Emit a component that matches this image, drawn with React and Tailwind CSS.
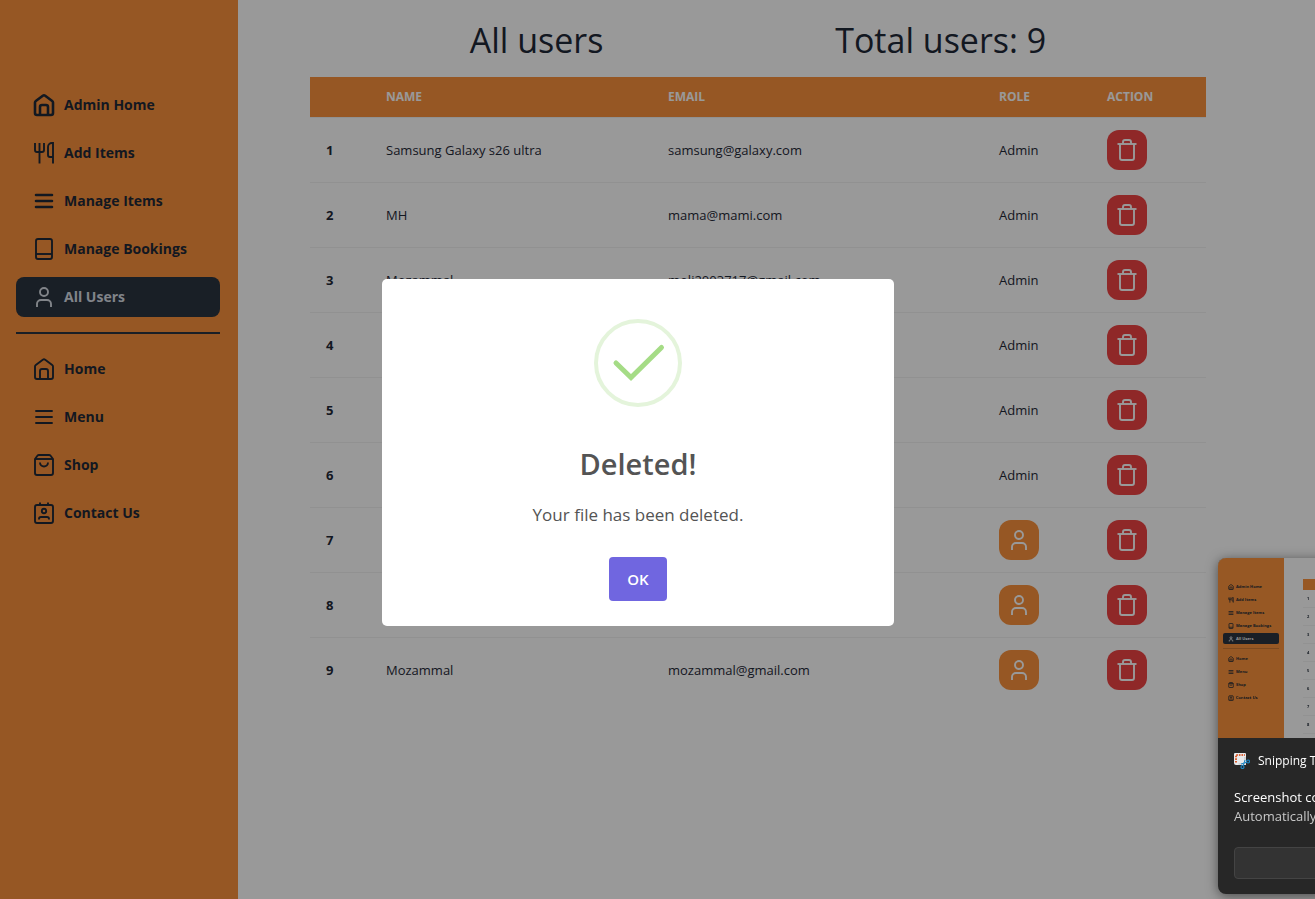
const INK = 'text-[#1f2937]';

function Icon({ name, size = 'size-6', weight = 1.9 }) {
  const shapes = {
    home: (
      <>
        <path d="M3 9.6V20a2 2 0 0 0 2 2h14a2 2 0 0 0 2-2V9.6a2 2 0 0 0-.8-1.6l-7-5.3a2 2 0 0 0-2.4 0l-7 5.3A2 2 0 0 0 3 9.6Z" />
        <path d="M8 22v-8a2 2 0 0 1 2-2h4a2 2 0 0 1 2 2v8" />
      </>
    ),
    utensils: (
      <>
        <path d="M3 2v7a2 2 0 0 0 2 2h5a2 2 0 0 0 2-2V2" />
        <path d="M7.5 2v20.5" />
        <path d="M21 22.500V2h-1a4 4 0 0 0-4 4v8a2 2 0 0 0 2 2h3" />
      </>
    ),
    menu: <path d="M4 6h16M4 12h16M4 18h16" strokeLinecap="round" />,
    book: (
      <>
        <rect x="4" y="2" width="16" height="20" rx="2" />
        <path d="M4 17h16" />
      </>
    ),
    user: (
      <>
        <circle cx="12" cy="7" r="4" />
        <path d="M5 22v-3a4 4 0 0 1 4-4h6a4 4 0 0 1 4 4v3" />
      </>
    ),
    bag: (
      <>
        <path d="M3 6v14a2 2 0 0 0 2 2h14a2 2 0 0 0 2-2V6l-2.400-3.200A2 2 0 0 0 17 2H7a2 2 0 0 0-1.600.8L3 6Z" />
        <path d="M3 6h18" />
        <path d="M8 9.500a4 4 0 0 0 8 0" />
      </>
    ),
    contact: (
      <>
        <rect x="3" y="4" width="18" height="18" rx="2" />
        <path d="M8 1.500V4M16 1.500V4" />
        <circle cx="12" cy="10" r="2.200" />
        <path d="M7 18.500V18a2 2 0 0 1 2-2h6a2 2 0 0 1 2 2v.5" />
      </>
    ),
    trash: (
      <>
        <path d="M5 6v14a2 2 0 0 0 2 2h10a2 2 0 0 0 2-2V6" />
        <path d="M2.500 6h19" />
        <path d="M8 6V4a2 2 0 0 1 2-2h4a2 2 0 0 1 2 2v2" />
      </>
    ),
  };
  return (
    <svg
      viewBox="0 0 24 24"
      fill="none"
      stroke="currentColor"
      strokeWidth={weight}
      className={`${size} shrink-0`}
      aria-hidden="true"
    >
      {shapes[name]}
    </svg>
  );
}

const adminLinks = [
  { label: 'Admin Home', icon: 'home', weight: 2.6 },
  { label: 'Add Items', icon: 'utensils' },
  { label: 'Manage Items', icon: 'menu', weight: 2.6 },
  { label: 'Manage Bookings', icon: 'book' },
  { label: 'All Users', icon: 'user', active: true },
];

const siteLinks = [
  { label: 'Home', icon: 'home' },
  { label: 'Menu', icon: 'menu' },
  { label: 'Shop', icon: 'bag' },
  { label: 'Contact Us', icon: 'contact' },
];

const users = [
  { name: 'Samsung Galaxy s26 ultra', email: 'samsung@galaxy.com', admin: true },
  { name: 'MH', email: 'mama@mami.com', admin: true },
  { name: 'Mozammal', email: 'moli2003717@gmail.com', admin: true },
  { name: 'Admin', email: 'admin@gmail.com', admin: true },
  { name: 'Mozammal', email: 'admin@mail.com', admin: true },
  { name: 'Mozammal', email: 'user@gmail.com', admin: true },
  { name: 'User', email: 'user@mail.com', admin: false },
  { name: 'Mozammal', email: 'test@gmail.com', admin: false },
  { name: 'Mozammal', email: 'mozammal@gmail.com', admin: false },
];

function NavList({ links }) {
  return (
    <ul className="flex flex-col gap-2">
      {links.map((l) => (
        <li key={l.label}>
          <a
            href="#"
            className={`flex h-10 items-center gap-2 rounded-lg px-4 text-sm font-bold ${
              l.active ? 'bg-[#2b3440] text-[#d7dde4]' : INK
            }`}
          >
            <Icon name={l.icon} weight={l.weight} />
            {l.label}
          </a>
        </li>
      ))}
    </ul>
  );
}

function Sidebar() {
  return (
    <aside className="w-[238px] shrink-0 bg-[#fb923c] pt-[85px] pr-[18px] pl-4">
      <nav>
        <NavList links={adminLinks} />
        <hr className="my-[15px] border-t-2 border-[#2b3440]" />
        <NavList links={siteLinks} />
      </nav>
    </aside>
  );
}

function UsersTable() {
  return (
    <table className="w-full table-fixed border-separate border-spacing-0 text-left text-[13px] leading-5">
      <colgroup>
        <col className="w-[60px]" />
        <col className="w-[282px]" />
        <col />
        <col className="w-[108px]" />
        <col className="w-[115px]" />
      </colgroup>
      <thead className="text-xs text-white">
        <tr className="h-[41px] *:border-b *:border-[#f2f2f2] *:bg-[#fb923c] *:bg-clip-padding *:px-4">
          <th aria-label="Number" />
          <th>NAME</th>
          <th>EMAIL</th>
          <th>ROLE</th>
          <th>ACTION</th>
        </tr>
      </thead>
      <tbody>
        {users.map((u, i) => (
          <tr key={i} className="h-[65px] *:border-b *:border-[#f2f2f2] *:px-4 last:*:border-transparent">
            <th>{i + 1}</th>
            <td>{u.name}</td>
            <td>{u.email}</td>
            <td>
              {u.admin ? (
                'Admin'
              ) : (
                <button
                  aria-label="Make admin"
                  className="flex size-10 items-center justify-center rounded-xl bg-[#fb923c] text-white"
                >
                  <Icon name="user" />
                </button>
              )}
            </td>
            <td>
              <button
                aria-label="Delete user"
                className="flex size-10 items-center justify-center rounded-xl bg-[#ef4444] text-white"
              >
                <Icon name="trash" />
              </button>
            </td>
          </tr>
        ))}
      </tbody>
    </table>
  );
}

function DeletedDialog() {
  return (
    <div className="fixed inset-0 flex items-center justify-center bg-black/40 pt-1.5 pr-[39px]">
      <div
        role="dialog"
        aria-labelledby="dialog-title"
        className="flex w-[512px] flex-col items-center rounded-[5px] bg-white pt-10 pb-[25px] text-[#545454]"
      >
        <svg viewBox="0 0 88 88" className="size-[88px]" fill="none" aria-hidden="true">
          <circle cx="44" cy="44" r="42" stroke="#e4f4db" strokeWidth="4" />
          <path d="M22 44l15 14.500L67.500 28.500" stroke="#a5dc86" strokeWidth="5" strokeLinecap="round" />
        </svg>
        <h2 id="dialog-title" className="mt-9 text-[29px] leading-[42px] font-semibold">
          Deleted!
        </h2>
        <p className="mt-[18px] text-[17px] leading-6">Your file has been deleted.</p>
        <button className="mt-[30px] h-11 w-[58px] rounded bg-[#7066e0] text-[15px] font-semibold text-white">
          OK
        </button>
      </div>
    </div>
  );
}

function ThumbList({ links }) {
  return (
    <ul className="flex flex-col gap-0.5">
      {links.map((l) => (
        <li
          key={l.label}
          className={`flex h-[11px] items-center gap-0.5 rounded-xs px-[5px] text-[4px] leading-none font-bold ${
            l.active ? 'bg-[#1a1f26] text-[#999]' : 'text-[#131921]'
          }`}
        >
          <Icon name={l.icon} size="size-[6px]" weight={3} />
          {l.label}
        </li>
      ))}
    </ul>
  );
}

function Thumbnail() {
  return (
    <div className="flex h-[180px] overflow-hidden rounded-t-lg bg-[#999]" aria-hidden="true">
      <div className="w-[66px] shrink-0 bg-[#975824] px-[5px] pt-[23px]">
        <ThumbList links={adminLinks} />
        <div className="my-1 border-t border-[#7d4a20]" />
        <ThumbList links={siteLinks} />
      </div>
      <div className="flex-1 pt-[21px] pl-[19px]">
        <div className="h-[11px] bg-[#975824]" />
        {users.map((u, i) => (
          <div
            key={i}
            className="h-[18px] border-b border-[#929292] pt-[7px] pl-1 text-[4px] leading-none font-bold text-[#131921]"
          >
            {i + 1}
          </div>
        ))}
      </div>
    </div>
  );
}

function SnippingToast() {
  return (
    <div className="fixed -right-[267px] bottom-[5px] w-[364px] rounded-lg bg-[#272727] text-white shadow-[0_2px_12px_rgba(0,0,0,0.5)]">
      <Thumbnail />
      <div className="px-4 pt-3 pb-[15px]">
        <div className="flex h-[22px] items-center gap-2 text-xs">
          <svg viewBox="0 0 16 16" className="size-4" aria-hidden="true">
            <path d="M1 0h10a1 1 0 0 1 1 1v11H2a2 2 0 0 1-2-2V1a1 1 0 0 1 1-1Z" fill="#e8eaec" />
            <path d="M2 9.500V2H11" fill="none" stroke="#d83b01" strokeWidth="1.600" strokeDasharray="1.600 1" />
            <path d="M4.500 11h6.500V4" fill="none" stroke="#b9bec3" strokeWidth="1" />
            <circle cx="14" cy="8.500" r="1.500" fill="none" stroke="#1b86c5" strokeWidth="1.200" />
            <circle cx="8.500" cy="14" r="1.500" fill="none" stroke="#1b86c5" strokeWidth="1.200" />
            <path d="M12.600 9.200L7 11M9.200 12.600L11 7" stroke="#1b86c5" strokeWidth="1" />
          </svg>
          Snipping Tool
        </div>
        <p className="mt-4 truncate text-[13px] leading-[19px]">Screenshot copied to clipboard</p>
        <p className="truncate text-[13px] leading-[19px] text-[#c8c8c8]">
          Automatically saved to screenshots folder.
        </p>
        <button
          aria-label="Mark-up and share"
          className="mt-[21px] block h-8 w-full rounded border border-[#444] bg-[#333]"
        />
      </div>
    </div>
  );
}

export default function App() {
  return (
    <div className={`flex min-h-screen overflow-x-hidden bg-white font-['Open_Sans',sans-serif] ${INK}`}>
      <Sidebar />
      <main className="min-w-0 flex-1 pr-[37px]">
        <div className="flex justify-evenly pt-5 pb-[17px] text-[34px] leading-10">
          <h1>All users</h1>
          <h2>Total users: 9</h2>
        </div>
        <div className="px-[72px]">
          <UsersTable />
        </div>
      </main>
      <DeletedDialog />
      <SnippingToast />
    </div>
  );
}
